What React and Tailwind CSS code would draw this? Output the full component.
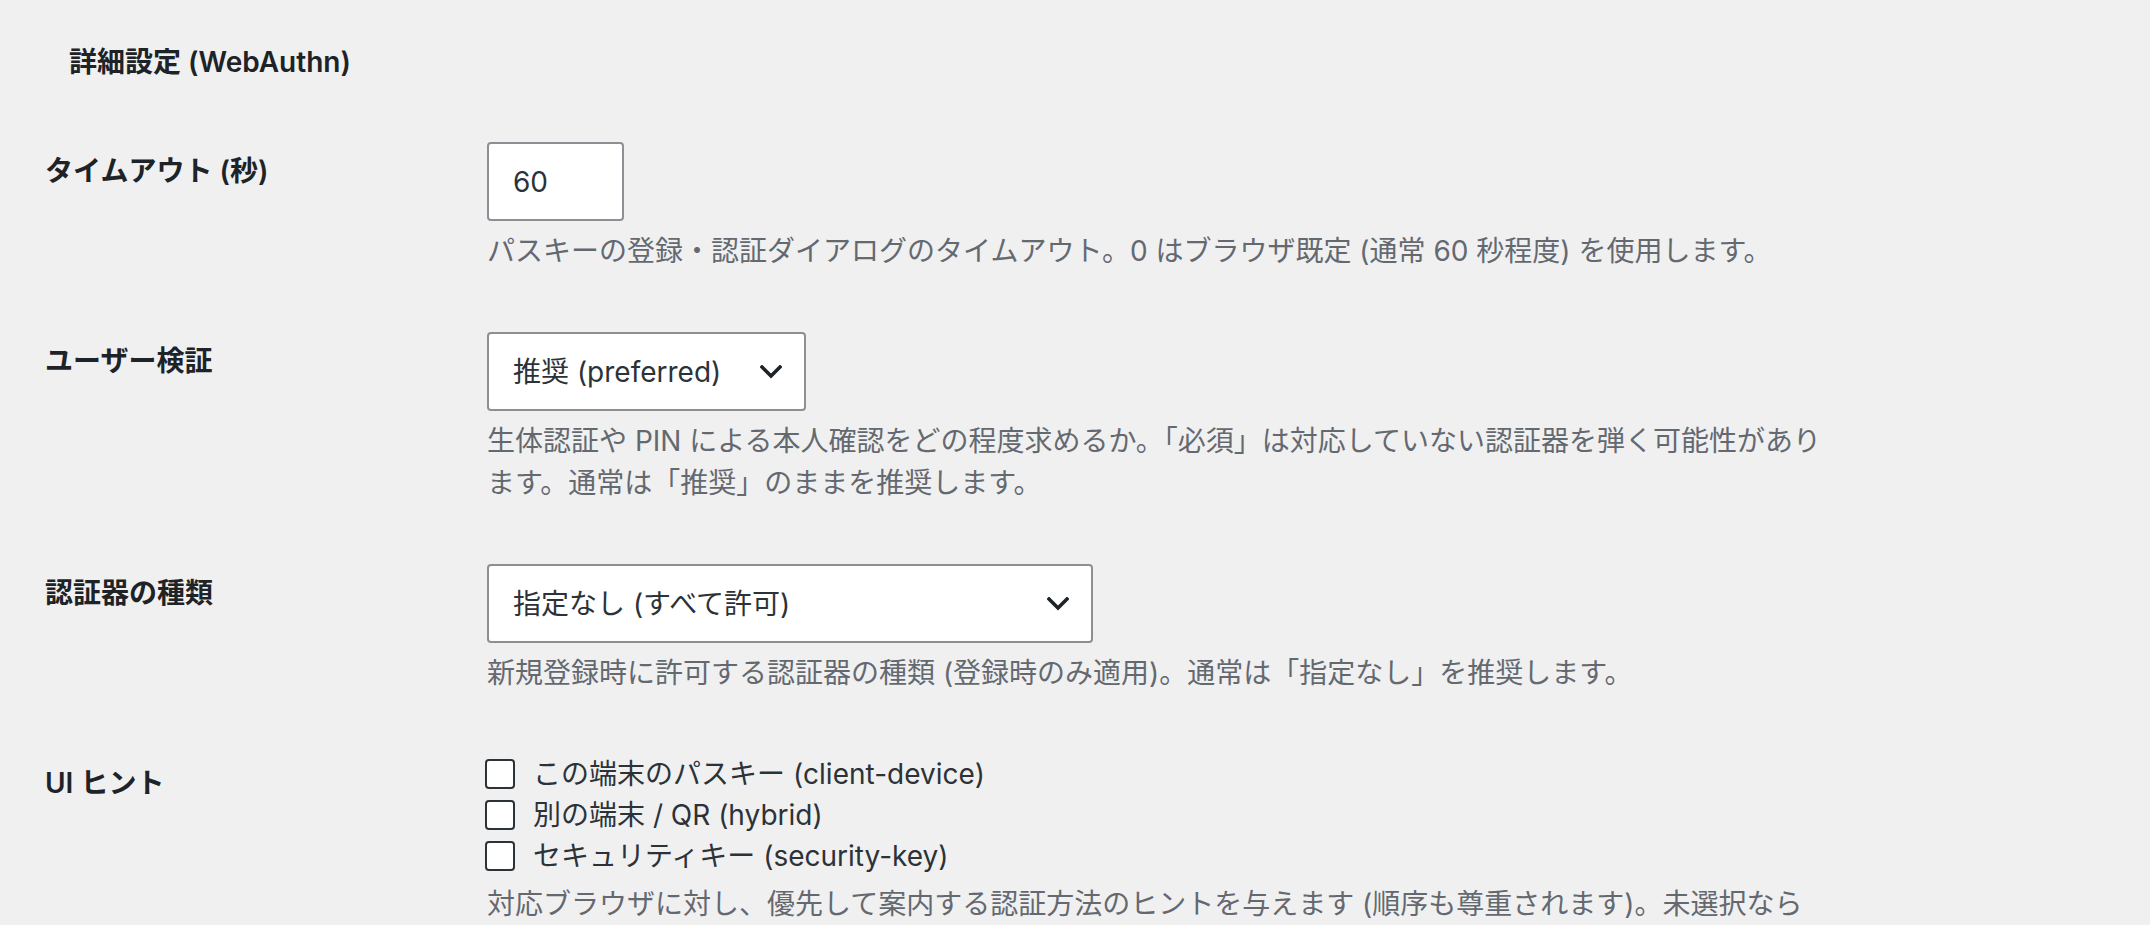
const FONT = "font-['Inter','Noto_Sans_CJK_JP',sans-serif]";

function Chevron() {
  return (
    <svg width="22" height="14" viewBox="0 0 22 14" className="shrink-0">
      <polyline points="2,2 11,11 20,2" fill="none" stroke="#1d2327" strokeWidth="3.5" strokeLinecap="square" />
    </svg>
  );
}

function Row({ label, children, labelTop = 'pt-[40px]' }) {
  return (
    <div className="flex">
      <div className={`w-[487px] shrink-0 pl-[45px] ${labelTop} text-[28px] leading-[38px] font-semibold text-[#1d2327]`}>
        {label}
      </div>
      <div className="flex-1 min-w-0">{children}</div>
    </div>
  );
}

function Desc({ lines, mt = 'mt-[9px]' }) {
  return (
    <p className={`${mt} text-[28px] leading-[42px] text-[#646970] whitespace-nowrap`}>
      {lines.map((l, i) => (
        <span key={i} className="block">{l}</span>
      ))}
    </p>
  );
}

function Select({ value, width }) {
  return (
    <div
      className={`${width} h-[79px] flex items-center justify-between pl-[24px] pr-[22px] bg-white border-2 border-[#8c8f94] rounded-[4px] text-[28px] text-[#2c3338]`}
    >
      <span>{value}</span>
      <Chevron />
    </div>
  );
}

function Check({ label }) {
  return (
    <div className="flex items-center h-[41px]">
      <span className="ml-[-2px] w-[30px] h-[30px] rounded-[4px] border-2 border-[#2c3338] bg-white shrink-0" />
      <span className="ml-[18px] text-[28px] text-[#2c3338]">{label}</span>
    </div>
  );
}

export default function App() {
  return (
    <div className={`h-[925px] overflow-hidden bg-[#f0f0f1] ${FONT}`}>
      <h2 className="pl-[69px] pt-[42px] text-[28px] leading-[40px] font-semibold text-[#1d2327]">
        詳細設定 (WebAuthn)
      </h2>

      <div className="mt-[30px]">
        <Row label="タイムアウト (秒)">
          <div className="py-[30px]">
            <div className="w-[137px] h-[79px] flex items-center pl-[24px] bg-white border-2 border-[#8c8f94] rounded-[4px] text-[28px] text-[#2c3338]">
              60
            </div>
            <Desc lines={['パスキーの登録・認証ダイアログのタイムアウト。0 はブラウザ既定 (通常 60 秒程度) を使用します。']} />
          </div>
        </Row>

        <Row label="ユーザー検証">
          <div className="py-[30px]">
            <Select value="推奨 (preferred)" width="w-[319px]" />
            <Desc
              lines={[
                '生体認証や PIN による本人確認をどの程度求めるか。「必須」は対応していない認証器を弾く可能性があり',
                'ます。通常は「推奨」のままを推奨します。',
              ]}
            />
          </div>
        </Row>

        <Row label="認証器の種類">
          <div className="py-[30px]">
            <Select value="指定なし (すべて許可)" width="w-[606px]" />
            <Desc lines={['新規登録時に許可する認証器の種類 (登録時のみ適用)。通常は「指定なし」を推奨します。']} />
          </div>
        </Row>

        <Row label="UI ヒント">
          <div className="pt-[29px] pb-[30px]">
            <Check label="この端末のパスキー (client-device)" />
            <Check label="別の端末 / QR (hybrid)" />
            <Check label="セキュリティキー (security-key)" />
            <Desc mt="mt-[7px]" lines={['対応ブラウザに対し、優先して案内する認証方法のヒントを与えます (順序も尊重されます)。未選択なら']} />
          </div>
        </Row>
      </div>
    </div>
  );
}
